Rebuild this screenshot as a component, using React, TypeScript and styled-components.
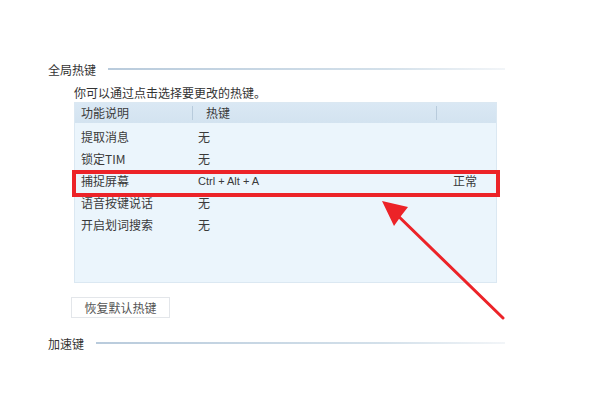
import React from 'react'
import styled, { createGlobalStyle } from 'styled-components'

const GlobalStyle = createGlobalStyle`
  html, body {
    margin: 0;
    padding: 0;
    background: #ffffff;
  }
  body {
    font-family: "Noto Sans CJK SC", "Liberation Sans", sans-serif;
    color: #3a3a3a;
  }
`

const Page = styled.div`
  position: relative;
  width: 600px;
  height: 400px;
  overflow: hidden;
  padding: 60px 95px 0 48px;
  box-sizing: border-box;
`

const SectionHeader = styled.div`
  display: flex;
  align-items: center;
  gap: 12px;
  height: 18px;
  font-size: 12px;
  color: #333;
`

const SectionLine = styled.div`
  flex: 1;
  height: 2px;
  background: linear-gradient(to right, #b9cbdc, #d3e0ea 70%, #f2f5f8);
`

const Body = styled.div`
  padding-left: 26px;
`

const Hint = styled.div`
  font-size: 12px;
  height: 18px;
  line-height: 18px;
  margin-top: 6px;
  color: #333;
`

const Table = styled.div`
  width: 423px;
  height: 181px;
  background: #ebf5fc;
  border: 1px solid #dbe8f2;
  box-sizing: border-box;
`

const HeaderRow = styled.div`
  display: grid;
  grid-template-columns: 117px 244px 1fr;
  height: 20px;
  background: linear-gradient(#dae8f4, #d3e3f0);
  font-size: 12px;
  line-height: 20px;
  margin-bottom: 3px;
`

const HeaderCell = styled.div<{ $divider?: boolean }>`
  padding-left: ${(p) => (p.$divider ? '13px' : '6px')};
  border-left: ${(p) => (p.$divider ? '1px solid #b8cbdc' : 'none')};
  margin: 3px 0;
  line-height: 14px;
`

const Row = styled.div`
  display: grid;
  grid-template-columns: 117px 255px 1fr;
  height: 22px;
  font-size: 12px;
  line-height: 22px;
`

const Cell = styled.div<{ $latin?: boolean }>`
  padding-left: 6px;
  font-family: ${(p) => (p.$latin ? '"Liberation Sans", sans-serif' : 'inherit')};
  font-size: ${(p) => (p.$latin ? '11px' : '12px')};
  white-space: nowrap;
`

const ResetButton = styled.button`
  display: block;
  margin: 14px 0 0 -3px;
  width: 99px;
  height: 21px;
  background: #fff;
  border: 1px solid #e3e6ea;
  font-family: inherit;
  font-size: 12px;
  color: #555;
  padding: 0;
`

const SecondHeader = styled(SectionHeader)`
  margin-top: 16px;
`

const Highlight = styled.div`
  position: absolute;
  left: 72px;
  top: 170px;
  width: 428px;
  height: 27px;
  border: 4px solid #ec2328;
  box-sizing: border-box;
`

const Arrow = styled.svg`
  position: absolute;
  left: 370px;
  top: 193px;
`

const rows = [
  { name: '提取消息', key: '无', state: '' },
  { name: '锁定TIM', key: '无', state: '' },
  { name: '捕捉屏幕', key: 'Ctrl + Alt + A', state: '正常' },
  { name: '语音按键说话', key: '无', state: '' },
  { name: '开启划词搜索', key: '无', state: '' },
]

export default function App() {
  return (
    <>
      <GlobalStyle />
      <Page>
        <SectionHeader>
          全局热键
          <SectionLine />
        </SectionHeader>
        <Body>
          <Hint>你可以通过点击选择要更改的热键。</Hint>
          <Table>
            <HeaderRow>
              <HeaderCell>功能说明</HeaderCell>
              <HeaderCell $divider>热键</HeaderCell>
              <HeaderCell $divider />
            </HeaderRow>
            {rows.map((r) => (
              <Row key={r.name}>
                <Cell>{r.name}</Cell>
                <Cell $latin={r.key !== '无'}>{r.key}</Cell>
                <Cell>{r.state}</Cell>
              </Row>
            ))}
          </Table>
          <ResetButton>恢复默认热键</ResetButton>
        </Body>
        <SecondHeader>
          加速键
          <SectionLine />
        </SecondHeader>
        <Highlight />
        <Arrow width="140" height="130" viewBox="0 0 140 130">
          <line x1="133" y1="125" x2="22" y2="17" stroke="#ec2328" strokeWidth="3" strokeLinecap="round" />
          <polygon points="12,8 38,14 31,23 24,33" fill="#ec2328" />
        </Arrow>
      </Page>
    </>
  )
}
